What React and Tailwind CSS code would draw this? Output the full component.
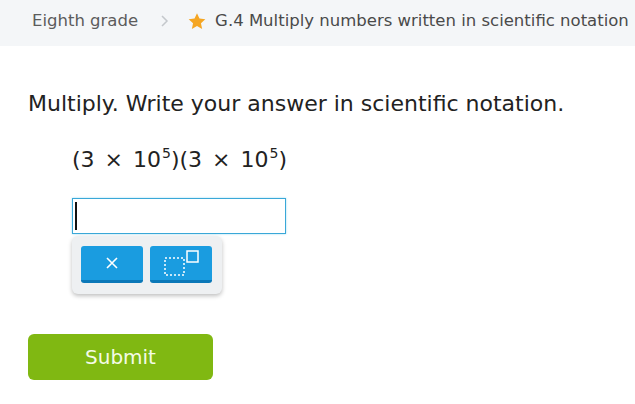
import React from "react";

export default function App() {
  const font = { fontFamily: '"DejaVu Sans", Verdana, sans-serif' };
  return (
    <div className="w-[635px] h-[404px] bg-white overflow-hidden" style={font}>
      <div className="h-[46px] bg-[#f4f6f8] flex items-center pl-[32px] pb-[4px] text-[16.5px] text-[#5c5c5c] whitespace-nowrap">
        <span>Eighth grade</span>
        <svg className="ml-[22px]" width="10" height="14" viewBox="0 0 10 14">
          <path d="M2 2 L7 7 L2 12" fill="none" stroke="#c4c8cc" strokeWidth="1.5" />
        </svg>
        <svg className="ml-[17px]" width="20" height="19" viewBox="0 0 24 24">
          <path d="M12 1.5 L15.1 8.3 L22.5 9.1 L17 14.1 L18.5 21.5 L12 17.8 L5.5 21.5 L7 14.1 L1.5 9.1 L8.9 8.3 Z" fill="#f5a623" />
        </svg>
        <span className="ml-[8px] text-[#4a4a4a]">G.4 Multiply numbers written in scientific notation</span>
      </div>
      <div className="pl-[28px] pt-[44px]">
        <div className="text-[22px] leading-[28px] text-[#222] whitespace-nowrap">Multiply. Write your answer in scientific notation.</div>
        <div className="pl-[44px] pt-[28px] text-[22px] leading-[28px] text-[#222] whitespace-nowrap">
          (3 <span className="px-[3px]">×</span> 10<span className="text-[14px] relative -top-[9px] ml-[1px]">5</span>)(3 <span className="px-[3px]">×</span> 10<span className="text-[14px] relative -top-[9px] ml-[1px]">5</span>)
        </div>
        <div className="pl-[44px] pt-[22px]">
          <div className="w-[214px] h-[36px] border border-[#3aa8d8] shadow-[0_0_2px_#9fdcf3] bg-white flex items-center pl-[2px]">
            <div className="w-[2px] h-[28px] bg-[#111]" />
          </div>
          <div className="mt-[2px] w-[150px] h-[58px] bg-[#eef0f2] rounded-[6px] shadow-[0_2px_4px_rgba(0,0,0,0.25)] flex gap-[7px] pl-[9px] pt-[10px]">
            <div className="w-[62px] h-[37px] bg-[#1a9ce0] rounded-[3px] border-b-[3px] border-[#0b78b8] flex items-center justify-center">
              <svg width="12" height="12" viewBox="0 0 12 12">
                <path d="M1 1 L11 11 M11 1 L1 11" stroke="white" strokeWidth="1.6" />
              </svg>
            </div>
            <div className="w-[62px] h-[37px] bg-[#1a9ce0] rounded-[3px] border-b-[3px] border-[#0b78b8] relative">
              <svg className="absolute left-[14px] top-[4px]" width="36" height="26" viewBox="0 0 36 26">
                <rect x="1" y="8" width="19" height="17" fill="none" stroke="white" strokeWidth="1.5" strokeDasharray="2 2" />
                <rect x="23" y="1" width="11" height="11" fill="none" stroke="white" strokeWidth="1.5" />
              </svg>
            </div>
          </div>
        </div>
        <div className="mt-[40px] w-[185px] h-[46px] bg-[#80b812] rounded-[6px] flex items-center justify-center text-[20px] text-[#f4fbe6]">
          Submit
        </div>
      </div>
    </div>
  );
}
